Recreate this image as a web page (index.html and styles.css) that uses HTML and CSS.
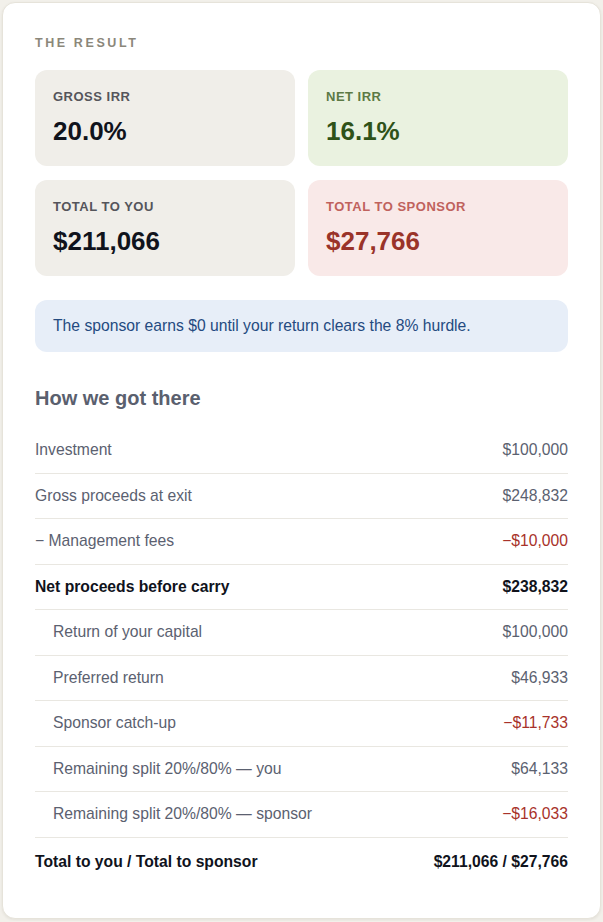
FILE: index.html
```html
<!DOCTYPE html>
<html>
<head>
<meta charset="utf-8">
<link rel="stylesheet" href="styles.css">
</head>
<body>
<div class="card">
  <div class="eyebrow">THE RESULT</div>
  <div class="tiles">
    <div class="tile tile-neutral">
      <div class="tile-label">GROSS IRR</div>
      <div class="tile-value">20.0%</div>
    </div>
    <div class="tile tile-green">
      <div class="tile-label">NET IRR</div>
      <div class="tile-value">16.1%</div>
    </div>
    <div class="tile tile-neutral">
      <div class="tile-label">TOTAL TO YOU</div>
      <div class="tile-value">$211,066</div>
    </div>
    <div class="tile tile-red">
      <div class="tile-label">TOTAL TO SPONSOR</div>
      <div class="tile-value">$27,766</div>
    </div>
  </div>
  <div class="note">The sponsor earns $0 until your return clears the 8% hurdle.</div>
  <h2 class="section-title">How we got there</h2>
  <div class="rows">
    <div class="row"><span>Investment</span><span>$100,000</span></div>
    <div class="row"><span>Gross proceeds at exit</span><span>$248,832</span></div>
    <div class="row"><span>− Management fees</span><span class="neg">−$10,000</span></div>
    <div class="row row-bold"><span>Net proceeds before carry</span><span>$238,832</span></div>
    <div class="row row-indent"><span>Return of your capital</span><span>$100,000</span></div>
    <div class="row row-indent"><span>Preferred return</span><span>$46,933</span></div>
    <div class="row row-indent"><span>Sponsor catch-up</span><span class="neg">−$11,733</span></div>
    <div class="row row-indent"><span>Remaining split 20%/80% — you</span><span>$64,133</span></div>
    <div class="row row-indent"><span>Remaining split 20%/80% — sponsor</span><span class="neg">−$16,033</span></div>
    <div class="row row-bold row-last"><span>Total to you / Total to sponsor</span><span>$211,066 / $27,766</span></div>
  </div>
</div>
</body>
</html>
```
FILE: styles.css
```css
html, body {
  margin: 0;
  padding: 0;
  background: #f2f0ea;
}
body {
  padding: 2px;
  font-family: "Liberation Sans", Arial, Helvetica, sans-serif;
}
.card {
  background: #ffffff;
  border: 1px solid #e6e3da;
  border-radius: 13px;
  padding: 33px 32px 34px 32px;
  box-shadow: 0 1px 3px rgba(60, 50, 20, 0.08);
}
.eyebrow {
  font-size: 12.5px;
  line-height: 15px;
  font-weight: 700;
  letter-spacing: 2.6px;
  color: #8b877a;
  margin-bottom: 19px;
}
.tiles {
  display: grid;
  grid-template-columns: 1fr 1fr;
  column-gap: 13px;
  row-gap: 14px;
}
.tile {
  border-radius: 12px;
  padding: 19px 18px 20px 18px;
  height: 96px;
  box-sizing: border-box;
}
.tile-label {
  font-size: 13px;
  line-height: 16px;
  font-weight: 700;
  letter-spacing: 0.5px;
}
.tile-value {
  margin-top: 11px;
  font-size: 26px;
  line-height: 31px;
  font-weight: 700;
}
.tile-neutral { background: #f0eee9; }
.tile-neutral .tile-label { color: #55555b; }
.tile-neutral .tile-value { color: #10131c; }
.tile-green { background: #eaf2e0; }
.tile-green .tile-label { color: #5c7a45; }
.tile-green .tile-value { color: #2f5218; }
.tile-red { background: #f9e9e8; }
.tile-red .tile-label { color: #c0625d; }
.tile-red .tile-value { color: #9a3329; }
.note {
  margin-top: 24px;
  background: #e7eef8;
  border-radius: 12px;
  padding: 16px 18px;
  font-size: 15.7px;
  line-height: 20px;
  color: #244a80;
}
.section-title {
  margin: 34px 0 18px 0;
  font-size: 20px;
  line-height: 24px;
  font-weight: 700;
  color: #5a606e;
}
.rows {
  display: flex;
  flex-direction: column;
}
.row {
  display: flex;
  justify-content: space-between;
  padding: 11px 0;
  border-bottom: 1px solid #e9e7e1;
  font-size: 15.7px;
  line-height: 22.5px;
  color: #5b6170;
}
.row-indent span:first-child {
  padding-left: 18px;
}
.row-bold {
  font-weight: 700;
  color: #10131c;
}
.row-last {
  border-bottom: none;
  padding-top: 13px;
}
.neg {
  color: #a8322a;
}
```
